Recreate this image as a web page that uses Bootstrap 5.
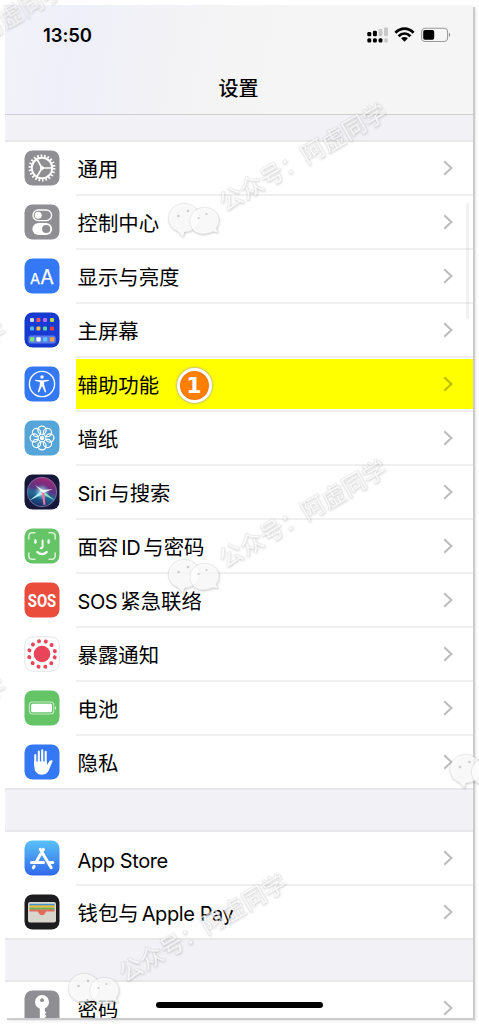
<!DOCTYPE html>
<html lang="zh-CN">
<head>
<meta charset="utf-8">
<meta name="viewport" content="width=device-width, initial-scale=1">
<title>设置</title>
<link href="https://cdn.jsdelivr.net/npm/bootstrap@5.3.0/dist/css/bootstrap.min.css" rel="stylesheet">
<style>
body{width:479px;height:1024px;overflow:hidden;background:#fff;color:#000;font-family:Inter,"Noto Sans CJK SC",sans-serif;padding:5px 6px 6px 5px}
.phone{width:468px;height:1013px;background:#fff;box-shadow:2px 2px 0 #ccc,3px 3px 2px #e4e4e4}
.top-bar{height:110px;background:linear-gradient(100deg,#f3f3f9 0,#efeffa 14%,#f3f3f5 38%,#f5f5f5 60%);border-bottom:1px solid #cfcfd2}
.status{height:60px;padding:0 22px 0 38px}
.clock{font-size:18.5px;font-weight:600;line-height:1;letter-spacing:-.1px}
.page-title{font-size:20px;font-weight:500;line-height:48px;padding-right:1px}
.gap-first{height:27px;background:#f2f1f6;border-bottom:2px solid #e8e8eb}
.gap-band{height:42px;background:#f2f1f6;border-bottom:2px solid #e8e8eb}
.setting{height:54px;padding:0 0 0 19px;position:relative}
.setting>svg{width:36px;height:36px;margin-top:8px;flex:none}
.cell{height:54px;margin-left:16px;padding:5px 20px 0 1.5px;border-bottom:2px solid #efefef;font-size:20.4px;line-height:1}
.latin{font-size:20px;letter-spacing:-.4px}
.after-latin{margin-left:3px}
.group-end .cell{border-color:transparent}
.group-end{border-bottom:2px solid #e8e8ea}
.mark-on{background:linear-gradient(#ff0,#ff0) 0 1px/100% 50px no-repeat}
.cell .chev{width:10px;height:16px;margin-top:-6px;fill:none;stroke:#000;stroke-opacity:.26;stroke-width:2.1}
.step{width:35px;height:35px;border-radius:50%;background:#ff7f05;border:3px solid #fff;box-shadow:0 0 2px 1px #c9bd7c,inset 0 0 2px #c66a20;color:#fff;font:bold 22px/30px "DejaVu Sans",sans-serif;left:171.5px;top:10px}
.thumb{left:461px;top:198px;width:3px;height:116px;background:rgba(0,0,0,.05)}
.home-bar{left:151px;top:997px;width:167px;height:6px;border-radius:3px;background:#000}
.overlay-marks{left:0;top:0;pointer-events:none}
</style>
<script src="https://cdn.jsdelivr.net/npm/bootstrap@5.3.0/dist/js/bootstrap.bundle.min.js"></script>
</head>
<body>
<svg width="0" height="0" class="position-absolute">
  <symbol id="chev" viewBox="0 0 10 16"><path d="M1.2 1.2 8.4 8 1.2 14.8"/></symbol>
</svg>
<main class="phone position-relative">
 <div class="h-100 overflow-hidden">
  <header class="top-bar">
    <div class="status d-flex justify-content-between align-items-center">
      <span class="clock">13:50</span>
      <svg width="84" height="18" viewBox="0 0 84 18">
        <g><rect x="0.3" y="6" width="4" height="4.3" rx="1.3"/><rect x="5.9" y="4.7" width="4" height="5.6" rx="1.3"/><rect x="11.5" y="3" width="4" height="7.3" rx="1" fill="#c8c8c8"/><rect x="17.1" y="1.6" width="3.8" height="8.7" rx="1" fill="#c8c8c8"/>
        <rect x="0.3" y="12.2" width="4" height="4.3" rx="1.5"/><rect x="5.9" y="12.2" width="4" height="4.3" rx="1.5"/><rect x="11.5" y="12.2" width="4" height="4.3" rx="1.5"/><rect x="17.1" y="12.2" width="3.8" height="4.3" rx="1.5" fill="#c8c8c8"/></g>
        <g fill="none" stroke="#000" stroke-width="2.9"><path d="M28.4 6.700C33.800 1.200 41.200 1.200 46.600 6.700M31.600 10.200c3.600-3.500 8.200-3.500 11.800 0"/></g>
        <path d="M34.100 12.300c1.900-1.600 4.900-1.600 6.800 0L37.500 15.700z"/>
        <rect x="54.6" y="2.3" width="26" height="13.2" rx="3.6" fill="none" stroke="#999" stroke-width="1.1"/><rect x="56.2" y="4" width="11" height="9.8" rx="1.8"/><path d="M82 6.8q2 2.1 0 4.2z" fill="#777"/>
      </svg>
    </div>
    <div class="page-title text-center">设置</div>
  </header>
  <div class="gap-first"></div>

  <div class="setting d-flex">
    <svg viewBox="0 0 36 36"><rect x=".5" y=".5" width="35" height="35" rx="8" fill="#8e8e93"/><g fill="none" stroke="#fff"><circle cx="18" cy="18" r="12.2" stroke-width="2.600" stroke-dasharray="1.700 1.783"/><circle cx="18" cy="18" r="10.200" stroke-width="1.900"/><path stroke-width="1.700" d="M18 18h10M18 18 12.900 9.200M18 18 12.900 26.800"/></g><circle cx="18" cy="18" r="2" fill="#fff"/></svg>
    <div class="cell flex-grow-1 d-flex align-items-center justify-content-between"><span>通用</span><svg class="chev"><use href="#chev"/></svg></div>
  </div>
  <div class="setting d-flex">
    <svg viewBox="0 0 36 36"><rect x=".5" y=".5" width="35" height="35" rx="8" fill="#8e8e93"/><rect x="9" y="6" width="18.6" height="10.6" rx="5.3" fill="none" stroke="#fff" stroke-width="1.3"/><circle cx="14.2" cy="11.3" r="3.5" fill="#fff"/><rect x="8.4" y="18.9" width="19.8" height="12.2" rx="6.1" fill="#fff"/><circle cx="22.2" cy="25" r="4.1" fill="#8e8e93"/></svg>
    <div class="cell flex-grow-1 d-flex align-items-center justify-content-between"><span>控制中心</span><svg class="chev"><use href="#chev"/></svg></div>
  </div>
  <div class="setting d-flex">
    <svg viewBox="0 0 36 36"><rect x=".5" y=".5" width="35" height="35" rx="8" fill="#3478f6"/><g fill="#fff" stroke="#fff" stroke-width=".25" font-family="Inter,sans-serif"><text x="5.900" y="25.700" font-size="14.700">A</text><text x="16.200" y="25.700" font-size="19.800">A</text></g></svg>
    <div class="cell flex-grow-1 d-flex align-items-center justify-content-between"><span>显示与亮度</span><svg class="chev"><use href="#chev"/></svg></div>
  </div>
  <div class="setting d-flex">
    <svg viewBox="0 0 36 36"><rect x=".5" y=".5" width="35" height="35" rx="8" fill="#1238bc"/><rect x="1.5" y="1.5" width="33" height="33" rx="7" fill="#183ad4"/><rect x="4.3" y="23.5" width="27.4" height="8" rx="2.5" fill="#5e7ce8"/>
      <rect x="6" y="6" width="4" height="4" rx="1" fill="#d5d6da"/><rect x="12.4" y="6" width="4" height="4" rx="1" fill="#ef5566"/><rect x="19" y="6" width="4" height="4" rx="1" fill="#b56bf0"/><rect x="26" y="6" width="4" height="4" rx="1" fill="#b3d84e"/>
      <rect x="6" y="14.5" width="4" height="4" rx="1" fill="#55b8f3"/><rect x="12.4" y="14.5" width="4" height="4" rx="1" fill="#f6bb42"/><rect x="19" y="14.5" width="4" height="4" rx="1" fill="#5bd6a0"/><rect x="26" y="14.5" width="4" height="4" rx="1" fill="#ee4035"/>
      <rect x="6" y="25.3" width="4.3" height="4.3" rx="1" fill="#7be57a"/><rect x="12.4" y="25.3" width="4.3" height="4.3" rx="1" fill="#fff"/><rect x="19" y="25.3" width="4.3" height="4.3" rx="1" fill="#5bc8fa"/><rect x="26" y="25.3" width="4.3" height="4.3" rx="1" fill="#f7a044"/></svg>
    <div class="cell flex-grow-1 d-flex align-items-center justify-content-between"><span>主屏幕</span><svg class="chev"><use href="#chev"/></svg></div>
  </div>
  <div class="setting d-flex">
    <svg viewBox="0 0 36 36"><rect x=".5" y=".5" width="35" height="35" rx="8" fill="#3478f6"/><circle cx="18" cy="18" r="12.6" fill="none" stroke="#fff" stroke-width="1.4"/><circle cx="18" cy="11" r="1.7" fill="#fff"/><path d="M11.5 13.700 16.200 14.300h3.600l4.700-.6q.9.800 0 1.300l-4.300.9v3.200l2 7q-.8.800-1.400 0L18.300 20.500h-.6l-2.500 5.600q-.6.800-1.400 0l2-7v-3.200l-4.300-.9q-.9-.5 0-1.300z" fill="#fff"/></svg>
    <div class="cell mark-on flex-grow-1 d-flex align-items-center justify-content-between"><span>辅助功能</span><svg class="chev"><use href="#chev"/></svg></div>
    <span class="step position-absolute text-center">1</span>
  </div>
  <div class="setting d-flex">
    <svg viewBox="0 0 36 36"><rect x=".5" y=".5" width="35" height="35" rx="8" fill="#56a5d8"/><g fill="none" stroke="#fff" stroke-width="1.25"><circle cx="18" cy="10.2" r="4.1"/><circle cx="23.5" cy="12.5" r="4.1"/><circle cx="25.8" cy="18" r="4.1"/><circle cx="23.5" cy="23.5" r="4.1"/><circle cx="18" cy="25.8" r="4.1"/><circle cx="12.5" cy="23.5" r="4.1"/><circle cx="10.2" cy="18" r="4.1"/><circle cx="12.5" cy="12.5" r="4.1"/></g><circle cx="18" cy="18" r="2.2" fill="#fff"/></svg>
    <div class="cell flex-grow-1 d-flex align-items-center justify-content-between"><span>墙纸</span><svg class="chev"><use href="#chev"/></svg></div>
  </div>
  <div class="setting d-flex">
    <svg viewBox="0 0 36 36"><defs><linearGradient id="siri" x1=".6" y1="0" x2=".3" y2="1"><stop stop-color="#a82478"/><stop offset=".4" stop-color="#5b3480"/><stop offset=".6" stop-color="#1f6c96"/><stop offset="1" stop-color="#17235e"/></linearGradient><radialGradient id="glow"><stop stop-color="#fff"/><stop offset=".35" stop-color="#c9fff5" stop-opacity=".6"/><stop offset="1" stop-color="#4ad7e8" stop-opacity="0"/></radialGradient></defs><rect x=".5" y=".5" width="35" height="35" rx="8" fill="#17173b"/><circle cx="18" cy="18" r="14.7" fill="url(#siri)" stroke="#8580a6" stroke-width=".8"/><circle cx="18" cy="18" r="8" fill="url(#glow)"/><path d="M18 16.500 5.500 26.500 18.500 20.300z" fill="#b5effc"/><path d="M18 16l13 10.500-12-6z" fill="#86e8c0"/><path d="m17.500 18 2 13 2-.5L20.200 18z" fill="#ff70a8"/><path d="m17 17-6-6 8 5 10-1-10 4z" fill="#fff" opacity=".85"/></svg>
    <div class="cell flex-grow-1 d-flex align-items-center justify-content-between"><span><span class="latin">Siri</span><span class="after-latin">与搜索</span></span><svg class="chev"><use href="#chev"/></svg></div>
  </div>
  <div class="setting d-flex">
    <svg viewBox="0 0 36 36"><rect x=".5" y=".5" width="35" height="35" rx="8" fill="#65c466"/><g fill="none" stroke="#fff" stroke-linecap="round" stroke-width="1.5"><path opacity=".75" d="M4.8 11V8.2q0-3.4 3.4-3.4H11M25 4.8h2.8q3.4 0 3.4 3.4V11M31.2 25v2.8q0 3.4-3.4 3.4H25M11 31.2H8.2q-3.4 0-3.4-3.4V25"/><path stroke-width="2.3" d="M11.4 12.4v2.3M24.6 12.4v2.3M13.3 24.1q4.8 4 9.4 0"/><path stroke-width="1.9" d="M18.6 12.4v6q0 1.8-1.9 1.8"/></g></svg>
    <div class="cell flex-grow-1 d-flex align-items-center justify-content-between"><span>面容<span class="latin after-latin">ID</span><span class="after-latin">与密码</span></span><svg class="chev"><use href="#chev"/></svg></div>
  </div>
  <div class="setting d-flex">
    <svg viewBox="0 0 36 36"><rect x=".5" y=".5" width="35" height="35" rx="8" fill="#eb4d3d"/><text x="18" y="24.700" text-anchor="middle" textLength="28.500" lengthAdjust="spacingAndGlyphs" font-size="18.500" font-weight="700" font-family="Roboto,sans-serif" fill="#fff">SOS</text></svg>
    <div class="cell flex-grow-1 d-flex align-items-center justify-content-between"><span><span class="latin">SOS</span><span class="after-latin">紧急联络</span></span><svg class="chev"><use href="#chev"/></svg></div>
  </div>
  <div class="setting d-flex">
    <svg viewBox="0 0 36 36"><rect x=".8" y=".8" width="34.4" height="34.4" rx="8" fill="#fff" stroke="#e4e4e6"/><circle cx="18" cy="18" r="8.3" fill="#ea445a"/><circle cx="18" cy="18" r="13.1" transform="rotate(15 18 18)" fill="none" stroke="#ea445a" stroke-width="4" stroke-linecap="round" stroke-dasharray="0 6.859"/></svg>
    <div class="cell flex-grow-1 d-flex align-items-center justify-content-between"><span>暴露通知</span><svg class="chev"><use href="#chev"/></svg></div>
  </div>
  <div class="setting d-flex">
    <svg viewBox="0 0 36 36"><rect x=".5" y=".5" width="35" height="35" rx="8" fill="#65c466"/><rect x="5.3" y="12" width="24.5" height="12" rx="3" fill="none" stroke="#c8eac9" stroke-width="1.1"/><rect x="7.1" y="13.7" width="20.9" height="8.6" rx="1.5" fill="#fff"/><path d="M31 16q2 2 0 4z" fill="#e3f4e3"/></svg>
    <div class="cell flex-grow-1 d-flex align-items-center justify-content-between"><span>电池</span><svg class="chev"><use href="#chev"/></svg></div>
  </div>
  <div class="setting d-flex group-end">
    <svg viewBox="0 0 36 36"><rect x=".5" y=".5" width="35" height="35" rx="8" fill="#3478f6"/><g fill="none" stroke="#fff" stroke-width="2.1" stroke-linecap="round"><path d="M11.3 11v10M14.8 7.5V20M18.2 6.2V20M21.7 7.8V20"/></g><path d="M10.2 17.5h12.6v3.8l2.7-4.2q1.7-1.5 3.3-.3-1.6 3.6-3.3 8-1.9 5.9-7.4 5.9-7.9 0-7.9-9.3z" fill="#fff"/></svg>
    <div class="cell flex-grow-1 d-flex align-items-center justify-content-between"><span>隐私</span><svg class="chev"><use href="#chev"/></svg></div>
  </div>
  <div class="gap-band"></div>

  <div class="setting d-flex">
    <svg viewBox="0 0 36 36"><defs><linearGradient id="store" x2="0" y2="1"><stop stop-color="#5ac1f7"/><stop offset="1" stop-color="#3069ed"/></linearGradient></defs><rect x=".5" y=".5" width="35" height="35" rx="8" fill="url(#store)"/><g fill="none" stroke="#fff" stroke-width="3" stroke-linecap="round"><path d="M19.4 9.2 12.7 21M16.2 9.2l11 18.6M7.5 22.6h12M26 22.6h2.8M10.2 26.3l-.9 1.5"/></g></svg>
    <div class="cell flex-grow-1 d-flex align-items-center justify-content-between"><span class="latin">App Store</span><svg class="chev"><use href="#chev"/></svg></div>
  </div>
  <div class="setting d-flex group-end">
    <svg viewBox="0 0 36 36"><rect x=".5" y=".5" width="35" height="35" rx="8" fill="#1d1d1f"/><rect x="4" y="8" width="28" height="20.5" rx="2" fill="#d8d5cc"/><path d="M5.5 9.8h25v2h-25z" fill="#4292cf"/><path d="M5.5 11.4h25v2.2h-25z" fill="#f3b63b"/><path d="M5.5 13.6h25v2.2h-25z" fill="#61b551"/><path d="M5.5 15.6h25v2h-7.7q-1 0-1.5 1.3-.8 2.3-3.3 2.3t-3.3-2.3q-.5-1.3-1.5-1.3H5.500z" fill="#e26a5c"/></svg>
    <div class="cell flex-grow-1 d-flex align-items-center justify-content-between"><span>钱包与<span class="latin after-latin">Apple Pay</span></span><svg class="chev"><use href="#chev"/></svg></div>
  </div>
  <div class="gap-band"></div>

  <div class="setting d-flex">
    <svg viewBox="0 0 36 36"><rect x=".5" y=".5" width="35" height="35" rx="8" fill="#8e8e93"/><circle cx="18" cy="12" r="7" fill="#fff"/><circle cx="18" cy="10.2" r="1.9" fill="#8e8e93"/><path d="M15.800 17h5v4l1.600 1.600-1.600 1.700 1.600 1.700-1.600 2v3l-2.500 2.500-2.500-2.500z" fill="#fff"/></svg>
    <div class="cell flex-grow-1 d-flex align-items-center justify-content-between"><span>密码</span><svg class="chev"><use href="#chev"/></svg></div>
  </div>
 </div>
 <div class="thumb position-absolute"></div>
 <div class="home-bar position-absolute"></div>
</main>

<!-- repeated diagonal account watermark -->
<svg class="overlay-marks position-absolute" width="479" height="1024" viewBox="0 0 479 1024">
  <defs>
    <filter id="soft" x="-10%" y="-10%" width="120%" height="120%"><feDropShadow dx=".5" dy=".9" stdDeviation=".8" flood-color="#000" flood-opacity=".28"/></filter>
    <g id="bubbles" stroke="#000" stroke-opacity=".09" stroke-width=".8" fill="#fff" fill-opacity=".7">
      <path d="M-9.500-16.500c9 0 15.500 6.500 15.500 14.500s-6.500 14-15 14l-1.500 5.500-5-6C-21.500 9-25 4.500-25-1.500c0-8.500 7-15 15.500-15z"/>
      <path d="M11-12.500c8.500 0 14.500 6 14.500 13 0 3-1.200 5.500-2.800 7.500l1.800 4.500-5.300-.8C6 17.500-3.500 11.500-3.500.8c0-7.300 6-13.300 14.500-13.300z"/>
      <g stroke="none" fill="#bbb"><circle cx="-15" cy="-4" r="1.300"/><circle cx="-5.500" cy="-9" r="1.300"/><circle cx="5" cy="-2" r="1.100"/><circle cx="13" cy="-6" r="1.100"/></g>
    </g>
  </defs>
  <g filter="url(#soft)">
    <use href="#bubbles" x="193.500" y="220"/><use href="#bubbles" x="193.500" y="576"/><use href="#bubbles" x="93.500" y="990"/><use href="#bubbles" x="475" y="771"/>
    <g font-family="Noto Sans CJK SC,sans-serif" font-weight="500" font-size="23.700" text-anchor="middle" fill="#fff" fill-opacity=".6" stroke="#000" stroke-opacity=".08" stroke-width=".7">
      <text transform="translate(307 164.500) rotate(-30)">公众号：阿虚同学</text>
      <text transform="translate(307 521) rotate(-30)">公众号：阿虚同学</text>
      <text transform="translate(207 935) rotate(-30)">公众号：阿虚同学</text>
      <text transform="translate(-16 41) rotate(-30)">公众号：阿虚同学</text>
      <text transform="translate(-74 382) rotate(-30)">公众号：阿虚同学</text>
      <text transform="translate(-74 738) rotate(-30)">公众号：阿虚同学</text>
    </g>
  </g>
</svg>
</body>
</html>
